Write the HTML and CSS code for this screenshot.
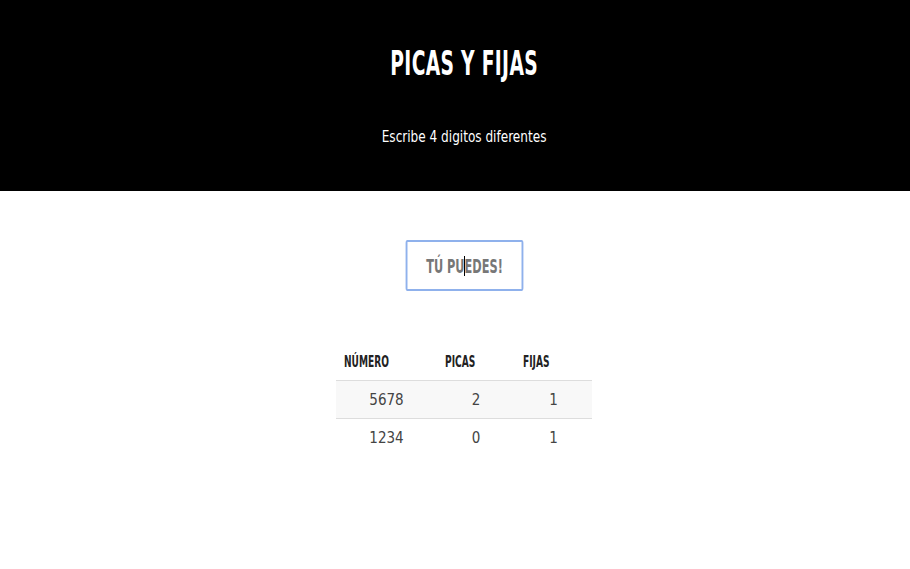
FILE: index.html
```html
<!DOCTYPE html>
<html lang="es">
<head>
<meta charset="utf-8">
<title>Picas y Fijas</title>
<link rel="stylesheet" href="styles.css">
</head>
<body>
<header class="hero">
  <h1 class="title"><span class="cond">PICAS Y FIJAS</span></h1>
  <p class="subtitle"><span class="narrow">Escribe 4 digitos diferentes</span></p>
</header>
<main class="content">
  <div class="field">
    <input class="guess" type="text" placeholder="TÚ PUEDES!">
    <span class="caret"></span>
  </div>
  <table class="results">
    <thead>
      <tr><th class="c1"><span class="cond">NÚMERO</span></th><th class="c2"><span class="cond">PICAS</span></th><th class="c3"><span class="cond">FIJAS</span></th></tr>
    </thead>
    <tbody>
      <tr class="odd"><td>5678</td><td>2</td><td>1</td></tr>
      <tr><td>1234</td><td>0</td><td>1</td></tr>
    </tbody>
  </table>
</main>
</body>
</html>
```
FILE: styles.css
```css
html, body { margin: 0; padding: 0; background: #fff; }
body { font-family: "DejaVu Sans Condensed", "DejaVu Sans", sans-serif; color: #333; }
.cond { display: inline-block; transform: scaleX(0.63); transform-origin: center; }
.narrow { display: inline-block; transform: scaleX(0.84); transform-origin: center; }
.hero { background: #000; color: #fff; text-align: center; padding: 44px 0 42px 18px; }
.title { margin: 0; font-size: 33px; line-height: 40px; font-weight: 700; letter-spacing: 0.5px; }
.subtitle { margin: 41px 0 0; font-size: 16px; line-height: 24px; font-weight: 400; }
.content { display: flex; flex-direction: column; align-items: center; padding-top: 49px; padding-left: 18px; }
.field { position: relative; width: 118px; height: 51px; }
.guess { box-sizing: border-box; width: 187px; height: 51px; margin-left: -34.5px; transform: scaleX(0.63); border: 2px solid #8fb1ec; border-left-width: 3px; border-right-width: 3px; border-radius: 3px; outline: none; text-align: center; font-family: inherit; font-weight: 700; font-size: 20px; color: #333; background: #fff; padding: 0; }
.guess::placeholder { color: #777; }
.caret { position: absolute; left: 59px; top: 16px; width: 1px; height: 20px; background: #000; }
.results { margin-top: 52px; border-collapse: collapse; width: 256px; font-size: 16px; }
.results th { text-align: left; padding: 0 8px; height: 37px; font-size: 16px; color: #222; border-bottom: 1px solid #ddd; white-space: nowrap; }
.results th .cond { transform-origin: left center; }
.results .c1 { width: 85px; }
.results .c2 { width: 62px; }
.results td { text-align: center; height: 37px; padding: 0 8px; border-bottom: 1px solid #ddd; color: #444; font-size: 15px; }
.results tbody tr:last-child td { border-bottom: none; }
.results .odd td { background: #f8f8f8; }
```
